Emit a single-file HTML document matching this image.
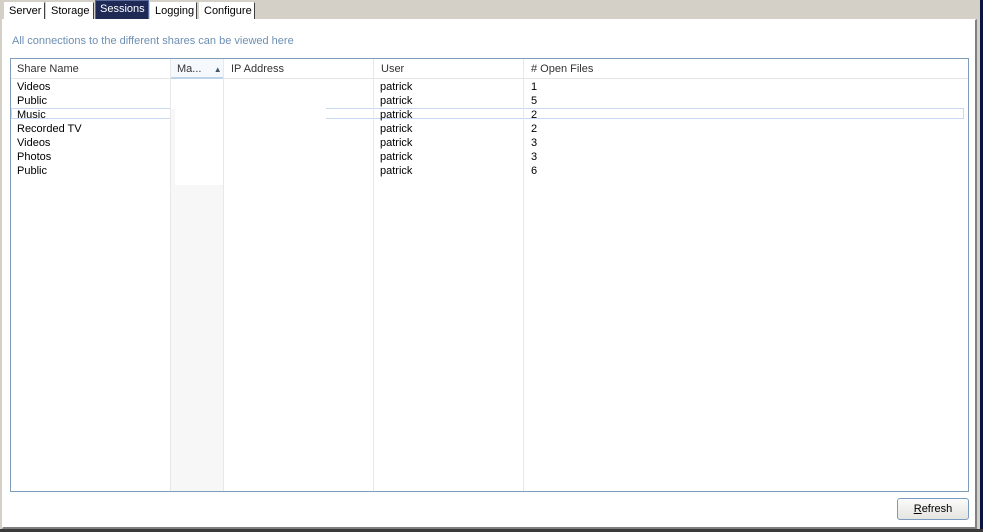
<!DOCTYPE html>
<html><head><style>
*{margin:0;padding:0;box-sizing:border-box}
body{width:983px;height:532px;background:#d4d0c8;font-family:"Liberation Sans",Tahoma,sans-serif;font-size:11px;position:relative;overflow:hidden}
.abs{position:absolute}
.tab{position:absolute;top:2px;height:17px;border:1px solid #fff;border-right:1px solid #404040;border-bottom:none;background:#fff;line-height:16px;padding-left:4px;color:#000}
.panel{left:2px;top:19px;width:975px;height:510px;background:#fff;border-top:1px solid #fff;border-left:1px solid #fff;border-right:2px solid #808080;border-bottom:2px solid #808080}
.list{left:10px;top:58px;width:959px;height:434px;border:1px solid #7f9db9;background:#fff}
.hdr{top:0;height:20px;line-height:21px;color:#333;border-bottom:1px solid #e5e5e5;padding-left:6px}
.vl{top:0;width:1px;height:432px;background:#e8e8e8}
</style></head><body>
<div class="abs" style="left:0;top:0;width:983px;height:19px;background:#d4d0c8"></div>
<div class="tab" style="left:4px;width:41px">Server</div>
<div class="tab" style="left:46px;width:48px">Storage</div>
<div class="tab" style="left:95px;top:0;height:19px;width:54px;background:#1e2a55;color:#fff;border-color:#5a6a9a">Sessions</div>
<div class="tab" style="left:150px;width:47px">Logging</div>
<div class="tab" style="left:199px;width:56px">Configure</div>
<div class="abs" style="left:980px;top:0;width:3px;height:532px;background:#0a1440"></div>
<div class="abs" style="left:0;top:529px;width:983px;height:3px;background:#3a3a3a"></div>
<div class="abs panel"></div>
<div class="abs" style="left:12px;top:35px;color:#6d8fb3">All connections to the different shares can be viewed here</div>
<div class="abs list">
 <div class="abs" style="left:160px;top:20px;width:53px;height:412px;background:#f7f7f7"></div>
 <div class="abs" style="left:160px;top:20px;width:155px;height:30px;background:#fff"></div>
 <div class="abs" style="left:164px;top:50px;width:49px;height:76px;background:#fff"></div>
 <div class="abs" style="left:0;top:49px;width:160px;height:11px;border:1px solid #c8d8f0;border-right:none"></div>
 <div class="abs" style="left:315px;top:49px;width:638px;height:11px;border:1px solid #c8d8f0;border-left:none"></div>
 <div class="abs hdr" style="left:0;width:957px"></div>
 <div class="abs hdr" style="left:0;width:160px">Share Name</div>
 <div class="abs hdr" style="left:160px;width:53px;border-bottom:2px solid #bcd3ea;background:#f5f9fd">Ma...&nbsp;&nbsp;&nbsp;&nbsp;<span style="font-size:8px;color:#456">▲</span></div>
 <div class="abs hdr" style="left:214px;width:150px">IP Address</div>
 <div class="abs hdr" style="left:364px;width:150px">User</div>
 <div class="abs hdr" style="left:514px;width:400px"># Open Files</div>
 <div class="abs vl" style="left:159px"></div>
 <div class="abs vl" style="left:212px"></div>
 <div class="abs vl" style="left:362px"></div>
 <div class="abs vl" style="left:512px"></div>
 <div class="abs" style="left:6px;top:21px;line-height:14px">Videos<br>Public<br>Music<br>Recorded TV<br>Videos<br>Photos<br>Public</div>
 <div class="abs" style="left:369px;top:21px;line-height:14px">patrick<br>patrick<br>patrick<br>patrick<br>patrick<br>patrick<br>patrick</div>
 <div class="abs" style="left:520px;top:21px;line-height:14px">1<br>5<br>2<br>2<br>3<br>3<br>6</div>
</div>
<div class="abs" style="left:897px;top:498px;width:72px;height:22px;border:1px solid #7a9cc0;border-radius:3px;background:linear-gradient(#fbfbfb,#e4e4e0);text-align:center;line-height:21px"><u>R</u>efresh</div>
</body></html>
